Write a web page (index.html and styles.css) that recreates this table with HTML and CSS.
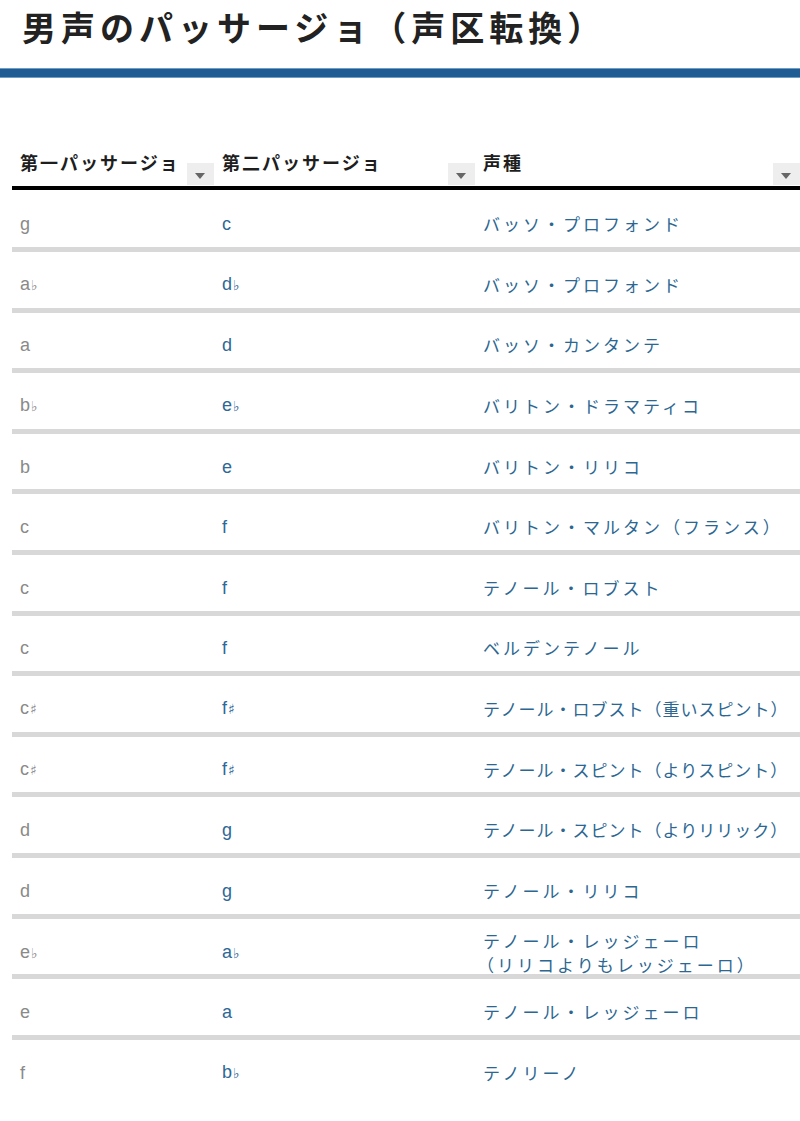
FILE: index.html
```html
<!DOCTYPE html>
<html lang="ja">
<head>
<meta charset="utf-8">
<title>男声のパッサージョ</title>
<link rel="stylesheet" href="styles.css">
</head>
<body>
<h1 class="title">男声のパッサージョ（声区転換）</h1>
<div class="bar"></div>
<div class="table">
  <div class="head">
    <div class="hcell"><span class="htext">第一パッサージョ</span><span class="sort"></span></div>
    <div class="hcell"><span class="htext">第二パッサージョ</span><span class="sort"></span></div>
    <div class="hcell"><span class="htext">声種</span><span class="sort"></span></div>
  </div>
  <div class="body">
    <div class="row"><div class="c1">g</div><div class="c2">c</div><div class="c3">バッソ・プロフォンド</div></div>
    <div class="row"><div class="c1">a<span class="acc">♭</span></div><div class="c2">d<span class="acc">♭</span></div><div class="c3">バッソ・プロフォンド</div></div>
    <div class="row"><div class="c1">a</div><div class="c2">d</div><div class="c3">バッソ・カンタンテ</div></div>
    <div class="row"><div class="c1">b<span class="acc">♭</span></div><div class="c2">e<span class="acc">♭</span></div><div class="c3">バリトン・ドラマティコ</div></div>
    <div class="row"><div class="c1">b</div><div class="c2">e</div><div class="c3">バリトン・リリコ</div></div>
    <div class="row"><div class="c1">c</div><div class="c2">f</div><div class="c3">バリトン・マルタン（フランス）</div></div>
    <div class="row"><div class="c1">c</div><div class="c2">f</div><div class="c3">テノール・ロブスト</div></div>
    <div class="row"><div class="c1">c</div><div class="c2">f</div><div class="c3">ベルデンテノール</div></div>
    <div class="row"><div class="c1">c<span class="acc">♯</span></div><div class="c2">f<span class="acc">♯</span></div><div class="c3 tight">テノール・ロブスト（重いスピント）</div></div>
    <div class="row"><div class="c1">c<span class="acc">♯</span></div><div class="c2">f<span class="acc">♯</span></div><div class="c3 tight">テノール・スピント（よりスピント）</div></div>
    <div class="row"><div class="c1">d</div><div class="c2">g</div><div class="c3 tight">テノール・スピント（よりリリック）</div></div>
    <div class="row"><div class="c1">d</div><div class="c2">g</div><div class="c3">テノール・リリコ</div></div>
    <div class="row"><div class="c1">e<span class="acc">♭</span></div><div class="c2">a<span class="acc">♭</span></div><div class="c3 two">テノール・レッジェーロ<br><span class="indent">（リリコよりもレッジェーロ）</span></div></div>
    <div class="row"><div class="c1">e</div><div class="c2">a</div><div class="c3">テノール・レッジェーロ</div></div>
    <div class="row last"><div class="c1">f</div><div class="c2">b<span class="acc">♭</span></div><div class="c3">テノリーノ</div></div>
  </div>
</div>
</body>
</html>
```

FILE: styles.css
```css
html, body {
  margin: 0;
  padding: 0;
  background: #ffffff;
}
body {
  width: 800px;
  overflow: hidden;
  font-family: "Noto Sans CJK JP", "Noto Sans", sans-serif;
}
.title {
  margin: 0;
  padding-left: 22px;
  height: 54px;
  line-height: 54px;
  font-size: 34px;
  font-weight: 700;
  letter-spacing: 5px;
  color: #222222;
  white-space: nowrap;
}
.bar {
  margin-top: 14px;
  height: 8px;
  background: #1f5c93;
  border-top: 1px solid #6f9cc4;
  border-bottom: 1px solid #6f9cc4;
}
.table {
  margin-top: 52px;
  margin-left: 12px;
  width: 800px;
}
.head {
  display: grid;
  grid-template-columns: 202px 261px 325px;
  height: 56px;
  border-bottom: 4px solid #000000;
}
.hcell {
  display: flex;
  align-items: flex-end;
  justify-content: space-between;
  padding-left: 8px;
}
.htext {
  font-size: 18px;
  font-weight: 700;
  letter-spacing: 2px;
  line-height: 24px;
  color: #1e1e1e;
  padding-bottom: 12px;
  white-space: nowrap;
}
.sort {
  position: relative;
  width: 27px;
  height: 22px;
  margin-bottom: 1px;
  background: #eeeeee;
  flex: none;
}
.sort::after {
  content: "";
  position: absolute;
  left: 8px;
  top: 10px;
  border-left: 5.5px solid transparent;
  border-right: 5.5px solid transparent;
  border-top: 6px solid #666666;
}
.body {
  padding-top: 1.4px;
}
.row {
  display: grid;
  grid-template-columns: 202px 261px 325px;
  height: 60.6px;
  box-sizing: border-box;
  padding-top: 10px;
  border-bottom: 5px solid #d8d8d8;
  align-items: center;
}
.row.last {
  border-bottom: none;
  height: 55.6px;
}
.c1, .c2, .c3 {
  padding-left: 8px;
  line-height: 22px;
  white-space: nowrap;
}
.c1, .c2 {
  font-family: "Liberation Sans", Arial, sans-serif;
  font-size: 18px;
}
.c1 {
  color: #8a8a8a;
}
.c2 {
  color: #2f6796;
}
.c3 {
  font-size: 17px;
  letter-spacing: 3px;
  color: #2c6792;
}
.c3.tight {
  letter-spacing: 1px;
}
.c3.two {
  line-height: 24px;
}
.indent {
  margin-left: -6px;
}
.acc {
  font-family: "DejaVu Sans", sans-serif;
  font-size: 14px;
  margin-left: 1px;
}
```
